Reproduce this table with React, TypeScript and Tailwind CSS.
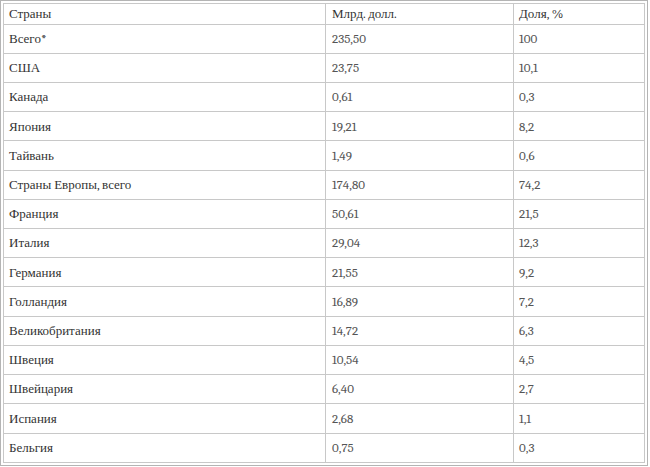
import React from 'react';

const rows: [string, string, string][] = [
  ['Всего*', '235,50', '100'],
  ['США', '23,75', '10,1'],
  ['Канада', '0,61', '0,3'],
  ['Япония', '19,21', '8,2'],
  ['Тайвань', '1,49', '0,6'],
  ['Страны Европы, всего', '174,80', '74,2'],
  ['Франция', '50,61', '21,5'],
  ['Италия', '29,04', '12,3'],
  ['Германия', '21,55', '9,2'],
  ['Голландия', '16,89', '7,2'],
  ['Великобритания', '14,72', '6,3'],
  ['Швеция', '10,54', '4,5'],
  ['Швейцария', '6,40', '2,7'],
  ['Испания', '2,68', '1,1'],
  ['Бельгия', '0,75', '0,3'],
];

// serif stack: the named serif families fall back to sans here, the default stack does not
const cell = 'border border-[#c8c8c8] text-left align-middle font-normal font-serif';

export default function App() {
  return (
    <div className="w-[650px] h-[467px] bg-white">
      <div className="w-[648px] h-[466px] border border-[#b4b4b4] p-[2px] font-serif text-[13px] text-[#333]">
        <table className="w-full h-full border-collapse table-fixed">
          <colgroup>
            <col className="w-[322px]" />
            <col className="w-[188px]" />
            <col />
          </colgroup>
          <thead>
            <tr>
              <th className={`${cell} pl-[5px]`}>Страны</th>
              <th className={`${cell} pl-[6px]`}>Млрд. долл.</th>
              <th className={`${cell} pl-[5px]`}>Доля, %</th>
            </tr>
          </thead>
          <tbody>
            {rows.map(([country, amount, share]) => (
              <tr key={country}>
                <td className={`${cell} pl-[5px]`}>{country}</td>
                <td className={`${cell} pl-[6px] text-[#555]`}>{amount}</td>
                <td className={`${cell} pl-[5px] text-[#555]`}>{share}</td>
              </tr>
            ))}
          </tbody>
        </table>
      </div>
    </div>
  );
}
